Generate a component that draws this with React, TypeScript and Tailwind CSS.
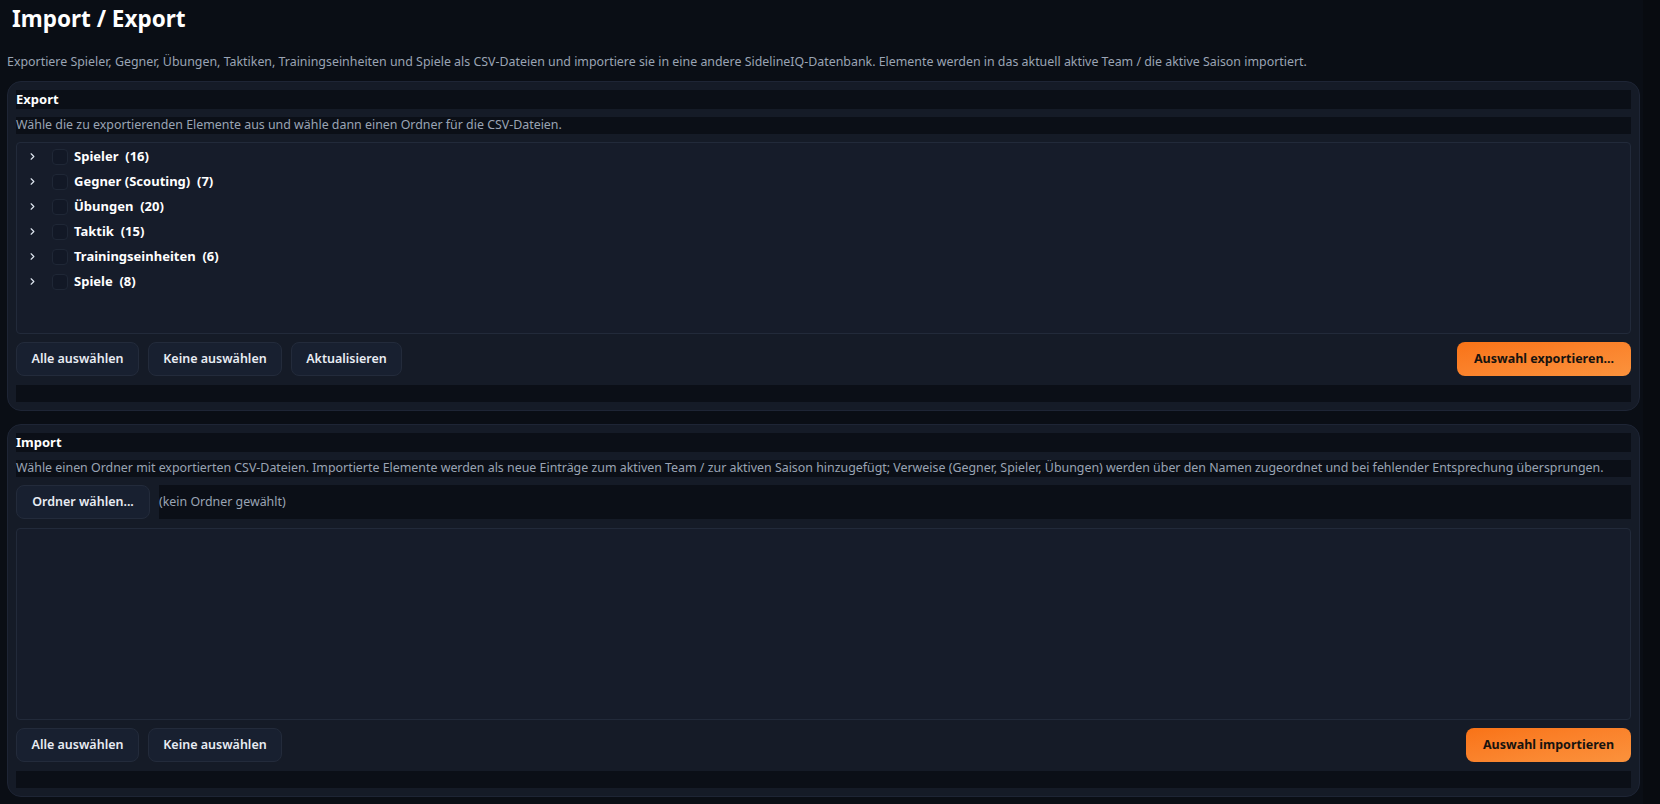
import { ChevronRight } from "lucide-react";

type Group = { name: string; count: number };

const groups: Group[] = [
  { name: "Spieler", count: 16 },
  { name: "Gegner (Scouting)", count: 7 },
  { name: "Übungen", count: 20 },
  { name: "Taktik", count: 15 },
  { name: "Trainingseinheiten", count: 6 },
  { name: "Spiele", count: 8 },
];

function GhostButton({ label, width }: { label: string; width: string }) {
  return (
    <button
      className={
        "h-[34px] rounded-lg bg-[#182030] border border-[#232b3b] text-[12.5px] font-semibold text-[#e8ecf3] " +
        width
      }
    >
      {label}
    </button>
  );
}

function AccentButton({ label, width }: { label: string; width: string }) {
  return (
    <button
      className={
        "h-[34px] rounded-lg bg-gradient-to-br from-[#f97316] to-[#fb923c] text-[12.5px] font-bold text-[#17130f] " +
        width
      }
    >
      {label}
    </button>
  );
}

function Strip({ children }: { children?: React.ReactNode }) {
  return (
    <div className="h-[17px] bg-[#0b0f17] flex items-center text-[12.4px] leading-none text-[#9aa4b4] whitespace-nowrap">
      {children}
    </div>
  );
}

function TreeBox({ children }: { children?: React.ReactNode }) {
  return (
    <div className="h-[192px] pt-px rounded-sm border border-[#222a3a] bg-[#161c2a]">{children}</div>
  );
}

function Card({ children }: { children: React.ReactNode }) {
  return (
    <section className="ml-[7px] w-[1633px] rounded-[14px] border border-[#1e2535] bg-[#151b27] px-2 pt-2 pb-2 flex flex-col">
      {children}
    </section>
  );
}

export default function App() {
  return (
    <div
      className="w-[1660px] h-[804px] bg-[#0a0e15] flex overflow-hidden"
      style={{ fontFamily: '"Noto Sans", "Open Sans", sans-serif' }}
    >
      <main className="flex-1 flex flex-col">
        <h1 className="px-3 pt-[4px] text-[22.5px] leading-[30px] font-bold text-white">Import / Export</h1>
        <p className="mt-[19px] px-[7px] text-[12.4px] leading-[17px] text-[#9aa4b4]">
          Exportiere Spieler, Gegner, Übungen, Taktiken, Trainingseinheiten und Spiele als CSV-Dateien und importiere sie in eine andere SidelineIQ-Datenbank. Elemente werden in das aktuell aktive Team / die aktive Saison importiert.
        </p>

        {/* Export */}
        <div className="mt-[11px]">
          <Card>
            <div className="h-[19px] bg-[#0b0f17] flex items-center text-[13px] font-bold text-white">Export</div>
            <div className="mt-2">
              <Strip>Wähle die zu exportierenden Elemente aus und wähle dann einen Ordner für die CSV-Dateien.</Strip>
            </div>
            <div className="mt-2">
              <TreeBox>
                {groups.map((g) => (
                  <div key={g.name} className="h-[25px] flex items-center">
                    <ChevronRight size={11} strokeWidth={2.5} className="ml-[10px] text-[#dfe6f0]" />
                    <span className="ml-[14px] w-4 h-4 rounded-[4px] bg-[#121826] border border-[#1f2736]" />
                    <span className="ml-[6px] text-[13px] font-bold text-white whitespace-pre">
                      {g.name}  ({g.count})
                    </span>
                  </div>
                ))}
              </TreeBox>
            </div>
            <div className="mt-2 flex items-center gap-[9px]">
              <GhostButton label="Alle auswählen" width="w-[123px]" />
              <GhostButton label="Keine auswählen" width="w-[134px]" />
              <GhostButton label="Aktualisieren" width="w-[111px]" />
              <div className="flex-1" />
              <AccentButton label="Auswahl exportieren..." width="w-[174px]" />
            </div>
            <div className="mt-[9px]">
              <Strip />
            </div>
          </Card>
        </div>

        {/* Import */}
        <div className="mt-[13px]">
          <Card>
            <div className="h-[19px] bg-[#0b0f17] flex items-center text-[13px] font-bold text-white">Import</div>
            <div className="mt-2">
              <Strip>
                Wähle einen Ordner mit exportierten CSV-Dateien. Importierte Elemente werden als neue Einträge zum aktiven Team / zur aktiven Saison hinzugefügt; Verweise (Gegner, Spieler, Übungen) werden über den Namen zugeordnet und bei fehlender Entsprechung übersprungen.
              </Strip>
            </div>
            <div className="mt-2 flex items-center gap-[9px]">
              <GhostButton label="Ordner wählen..." width="w-[134px]" />
              <div className="flex-1 h-[34px] bg-[#0b0f17] flex items-center text-[12.4px] text-[#9aa4b4]">
                (kein Ordner gewählt)
              </div>
            </div>
            <div className="mt-[9px]">
              <TreeBox />
            </div>
            <div className="mt-2 flex items-center gap-[9px]">
              <GhostButton label="Alle auswählen" width="w-[123px]" />
              <GhostButton label="Keine auswählen" width="w-[134px]" />
              <div className="flex-1" />
              <AccentButton label="Auswahl importieren" width="w-[165px]" />
            </div>
            <div className="mt-[9px]">
              <Strip />
            </div>
          </Card>
        </div>
      </main>
      <div className="w-[17px] bg-[#080b10]" />
    </div>
  );
}
